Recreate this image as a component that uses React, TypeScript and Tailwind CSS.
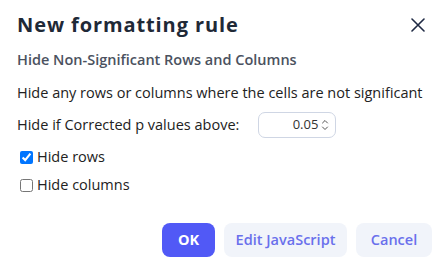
export default function App() {
  return (
    <div className="w-[445px] h-[271px] bg-white relative" style={{ fontFamily: '"Open Sans", Lato, sans-serif' }}>
      <div className="px-[17px] pt-[12px]">
        <div className="flex items-center justify-between">
          <h2 className="text-[20px] font-bold tracking-[0.9px] text-[#1f2937] leading-[26px]">New formatting rule</h2>
          <button className="mr-[3px] text-[#1f2a44]">
            <svg width="14" height="14" viewBox="0 0 14 14" fill="none" stroke="currentColor" strokeWidth="1.6" strokeLinecap="round">
              <path d="M1 1L13 13M13 1L1 13" />
            </svg>
          </button>
        </div>
        <p className="mt-[12px] text-[14.5px] font-semibold text-[#4b5260] leading-[20px]">Hide Non-Significant Rows and Columns</p>
        <p className="mt-[13px] text-[14.5px] text-[#222] leading-[20px]">Hide any rows or columns where the cells are not significant</p>
        <div className="mt-[9px] flex items-center">
          <span className="text-[14.5px] text-[#222] leading-[20px]">Hide if Corrected p values above:</span>
          <div className="ml-[19px] w-[78px] h-[26px] border border-[#cfd6e4] rounded-[7px] flex items-center justify-end pr-[6px] gap-[3px]">
            <span className="text-[13px] text-[#333]">0.05</span>
            <svg width="8" height="14" viewBox="0 0 8 14" fill="none" stroke="#555" strokeWidth="1" strokeLinecap="round" strokeLinejoin="round">
              <path d="M1.5 5L4 2.5L6.5 5M1.5 9L4 11.5L6.5 9" />
            </svg>
          </div>
        </div>
        <label className="mt-[9px] ml-[3px] flex items-center gap-[4px] text-[14.5px] text-[#222] leading-[20px]">
          <input type="checkbox" defaultChecked className="w-[13px] h-[13px] m-0" />
          Hide rows
        </label>
        <label className="mt-[8px] ml-[3px] flex items-center gap-[4px] text-[14.5px] text-[#222] leading-[20px]">
          <input type="checkbox" className="w-[13px] h-[13px] m-0" />
          Hide columns
        </label>
      </div>
      <div className="absolute left-0 right-0 top-[223px] flex justify-end gap-[9px] pr-[13px]">
        <button className="h-[34px] w-[53px] rounded-[8px] bg-[#5159f6] text-white text-[14.5px] font-bold">OK</button>
        <button className="h-[34px] w-[123px] rounded-[8px] bg-[#f1f4fa] text-[#6a70ec] text-[14.5px] font-semibold">Edit JavaScript</button>
        <button className="h-[34px] w-[76px] rounded-[8px] bg-[#f1f4fa] text-[#6a70ec] text-[14.5px] font-semibold">Cancel</button>
      </div>
    </div>
  )
}
